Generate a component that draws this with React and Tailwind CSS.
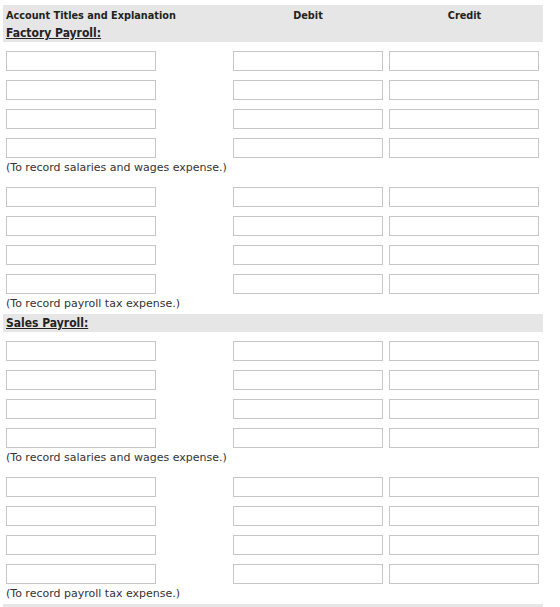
const groups = [
  { title: 'Factory Payroll:', notes: ['(To record salaries and wages expense.)', '(To record payroll tax expense.)'] },
  { title: 'Sales Payroll:', notes: ['(To record salaries and wages expense.)', '(To record payroll tax expense.)'] },
  { title: 'Administrative Payroll:', notes: [] },
]

const body = { fontFamily: '"DejaVu Sans", Verdana, sans-serif' }
const head = { fontFamily: '"DejaVu Sans Condensed", Tahoma, sans-serif' }

function Field() {
  return <input type="text" className="block w-[150px] h-[20px] bg-white border border-[#c6c6c6] outline-none" />
}

function EntryRow() {
  return (
    <div className="grid grid-cols-[227px_156px_157px] h-[29px] pt-[9px]">
      <div className="pl-[3px]"><Field /></div>
      <div className="pl-[3px]"><Field /></div>
      <div className="pl-[3px]"><Field /></div>
    </div>
  )
}

function Entry({ note }) {
  return (
    <div>
      {[0, 1, 2, 3].map(i => <EntryRow key={i} />)}
      <div className="h-[20px] pt-[2px] pl-[3px] text-[11px] leading-[16px] text-[#333]" style={body}>{note}</div>
    </div>
  )
}

export default function App() {
  return (
    <div className="bg-white min-h-[607px] pt-[5px] pl-[3px] overflow-hidden">
      <div className="w-[540px]">
        <div className="grid grid-cols-[227px_156px_157px] bg-[#e6e6e6] h-[19px] pt-[3px] leading-[16px] text-[10.8px] font-bold text-[#222]" style={head}>
          <div className="pl-[3px]">Account Titles and Explanation</div>
          <div className="text-center">Debit</div>
          <div className="text-center">Credit</div>
        </div>
        {groups.map((g, gi) => (
          <div key={gi}>
            <div className="bg-[#e6e6e6] h-[18px] pl-[3px] flex items-center text-[12px] font-bold underline text-[#222]" style={head}>
              {g.title}
            </div>
            {g.notes.map((n, i) => <Entry key={i} note={n} />)}
          </div>
        ))}
      </div>
    </div>
  )
}
